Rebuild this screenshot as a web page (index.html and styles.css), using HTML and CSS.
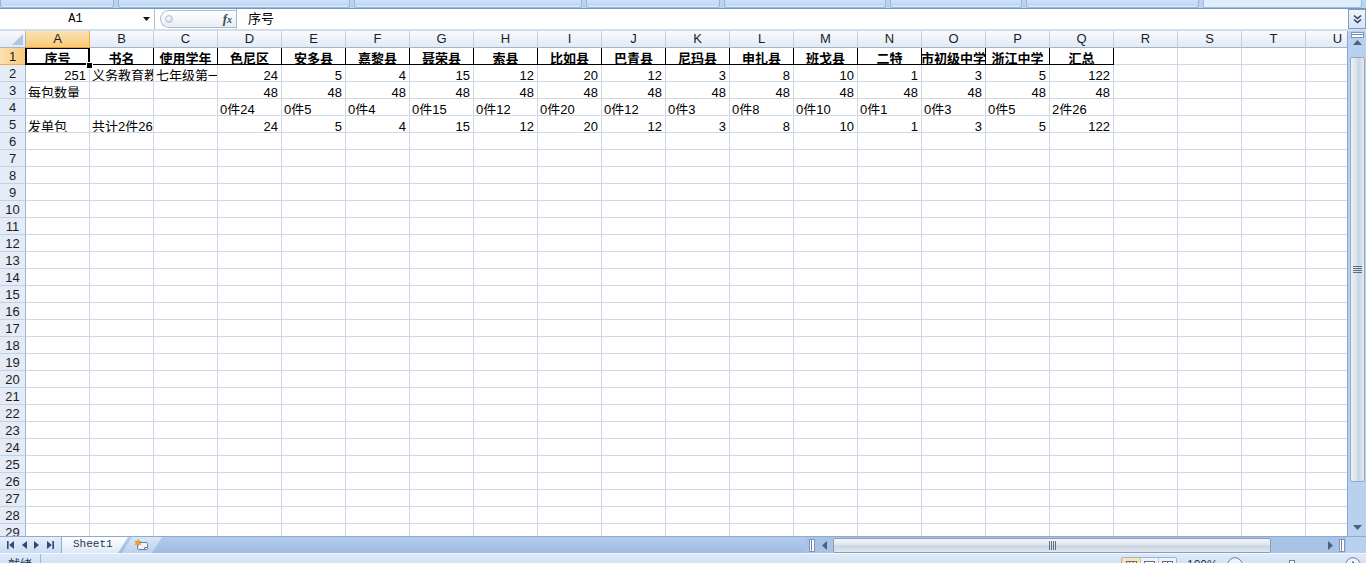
FILE: index.html
```html
<!DOCTYPE html>
<html lang="zh-CN">
<head>
<meta charset="utf-8">
<title>Sheet1</title>
<link rel="stylesheet" href="styles.css">
</head>
<body>
<div class="app">
  <div class="ribbon">
    <div class="grp g1"></div>
    <div class="grp g2"></div>
    <div class="grp g3"></div>
    <div class="grp g4"></div>
    <div class="grp g5"></div>
    <div class="grp g6"></div>
    <div class="grp g7"></div>
    <div class="rtail"></div>
  </div>

  <div class="fbar">
    <div class="namebox">
      <span class="nb-text">A1</span>
      <svg class="nb-arrow" width="7" height="4" viewBox="0 0 7 4"><path d="M0 0H7L3.5 4Z" fill="#111"/></svg>
    </div>
    <div class="fxpill">
      <span class="knob"></span>
      <span class="fx">f<span class="fxx">x</span></span>
    </div>
    <div class="finput">序号</div>
    <div class="fexpand">
      <svg width="9" height="10" viewBox="0 0 9 10"><path d="M1 1.5L4.5 4.5L8 1.5M1 5.5L4.5 8.5L8 5.5" fill="none" stroke="#2b3f5c" stroke-width="1.6"/></svg>
    </div>
  </div>

  <div class="main">
    <div class="sheet">
      <div class="hrow">
        <div class="corner"><svg width="11" height="11" viewBox="0 0 11 11"><path d="M11 0V11H0Z" fill="#b3c6df"/></svg></div>
        <div class="ch on">A</div>
        <div class="ch">B</div>
        <div class="ch">C</div>
        <div class="ch">D</div>
        <div class="ch">E</div>
        <div class="ch">F</div>
        <div class="ch">G</div>
        <div class="ch">H</div>
        <div class="ch">I</div>
        <div class="ch">J</div>
        <div class="ch">K</div>
        <div class="ch">L</div>
        <div class="ch">M</div>
        <div class="ch">N</div>
        <div class="ch">O</div>
        <div class="ch">P</div>
        <div class="ch">Q</div>
        <div class="ch">R</div>
        <div class="ch">S</div>
        <div class="ch">T</div>
        <div class="ch">U</div>
      </div>
      <div class="body">
        <div class="rhs">
          <div class="rh on">1</div>
          <div class="rh">2</div>
          <div class="rh">3</div>
          <div class="rh">4</div>
          <div class="rh">5</div>
          <div class="rh">6</div>
          <div class="rh">7</div>
          <div class="rh">8</div>
          <div class="rh">9</div>
          <div class="rh">10</div>
          <div class="rh">11</div>
          <div class="rh">12</div>
          <div class="rh">13</div>
          <div class="rh">14</div>
          <div class="rh">15</div>
          <div class="rh">16</div>
          <div class="rh">17</div>
          <div class="rh">18</div>
          <div class="rh">19</div>
          <div class="rh">20</div>
          <div class="rh">21</div>
          <div class="rh">22</div>
          <div class="rh">23</div>
          <div class="rh">24</div>
          <div class="rh">25</div>
          <div class="rh">26</div>
          <div class="rh">27</div>
          <div class="rh">28</div>
          <div class="rh">29</div>
        </div>
        <div class="cells">
          <div class="row">
            <div class="c hd a1">序号<span class="sel"></span><span class="fh"></span></div>
            <div class="c hd">书名</div>
            <div class="c hd">使用学年</div>
            <div class="c hd">色尼区</div>
            <div class="c hd">安多县</div>
            <div class="c hd">嘉黎县</div>
            <div class="c hd">聂荣县</div>
            <div class="c hd">索县</div>
            <div class="c hd">比如县</div>
            <div class="c hd">巴青县</div>
            <div class="c hd">尼玛县</div>
            <div class="c hd">申扎县</div>
            <div class="c hd">班戈县</div>
            <div class="c hd">二特</div>
            <div class="c hd">市初级中学</div>
            <div class="c hd">浙江中学</div>
            <div class="c hd">汇总</div>
            <div class="c"></div>
            <div class="c"></div>
            <div class="c"></div>
            <div class="c"></div>
          </div>
          <div class="row">
            <div class="c r">251</div>
            <div class="c">义务教育教</div>
            <div class="c">七年级第一</div>
            <div class="c r">24</div>
            <div class="c r">5</div>
            <div class="c r">4</div>
            <div class="c r">15</div>
            <div class="c r">12</div>
            <div class="c r">20</div>
            <div class="c r">12</div>
            <div class="c r">3</div>
            <div class="c r">8</div>
            <div class="c r">10</div>
            <div class="c r">1</div>
            <div class="c r">3</div>
            <div class="c r">5</div>
            <div class="c r">122</div>
            <div class="c"></div>
            <div class="c"></div>
            <div class="c"></div>
            <div class="c"></div>
          </div>
          <div class="row">
            <div class="c">每包数量</div>
            <div class="c"></div>
            <div class="c"></div>
            <div class="c r">48</div>
            <div class="c r">48</div>
            <div class="c r">48</div>
            <div class="c r">48</div>
            <div class="c r">48</div>
            <div class="c r">48</div>
            <div class="c r">48</div>
            <div class="c r">48</div>
            <div class="c r">48</div>
            <div class="c r">48</div>
            <div class="c r">48</div>
            <div class="c r">48</div>
            <div class="c r">48</div>
            <div class="c r">48</div>
            <div class="c"></div>
            <div class="c"></div>
            <div class="c"></div>
            <div class="c"></div>
          </div>
          <div class="row">
            <div class="c"></div>
            <div class="c"></div>
            <div class="c"></div>
            <div class="c">0件24</div>
            <div class="c">0件5</div>
            <div class="c">0件4</div>
            <div class="c">0件15</div>
            <div class="c">0件12</div>
            <div class="c">0件20</div>
            <div class="c">0件12</div>
            <div class="c">0件3</div>
            <div class="c">0件8</div>
            <div class="c">0件10</div>
            <div class="c">0件1</div>
            <div class="c">0件3</div>
            <div class="c">0件5</div>
            <div class="c">2件26</div>
            <div class="c"></div>
            <div class="c"></div>
            <div class="c"></div>
            <div class="c"></div>
          </div>
          <div class="row">
            <div class="c">发单包</div>
            <div class="c">共计2件26</div>
            <div class="c"></div>
            <div class="c r">24</div>
            <div class="c r">5</div>
            <div class="c r">4</div>
            <div class="c r">15</div>
            <div class="c r">12</div>
            <div class="c r">20</div>
            <div class="c r">12</div>
            <div class="c r">3</div>
            <div class="c r">8</div>
            <div class="c r">10</div>
            <div class="c r">1</div>
            <div class="c r">3</div>
            <div class="c r">5</div>
            <div class="c r">122</div>
            <div class="c"></div>
            <div class="c"></div>
            <div class="c"></div>
            <div class="c"></div>
          </div>
          <div class="empty"></div>
        </div>
      </div>
    </div>

    <div class="vscroll">
      <div class="vsplit"></div>
      <div class="vbtn up"><svg width="9" height="5" viewBox="0 0 9 5"><path d="M0 5L4.5 0L9 5Z" fill="#4a6280"/></svg></div>
      <div class="vthumb"><svg width="9" height="7" viewBox="0 0 9 7"><path d="M0 .5H9M0 2.5H9M0 4.5H9M0 6.5H9" stroke="#5f6f84" stroke-width="1"/></svg></div>
      <div class="vtrack"></div>
      <div class="vbtn down"><svg width="9" height="5" viewBox="0 0 9 5"><path d="M0 0L4.5 5L9 0Z" fill="#4a6280"/></svg></div>
    </div>
  </div>

  <div class="tabbar">
    <div class="nav">
      <svg width="7" height="8" viewBox="0 0 7 8"><path d="M0 0H1.6V8H0Z M7 0V8L2.2 4Z" fill="#2d4a74"/></svg>
      <svg width="5" height="8" viewBox="0 0 5 8"><path d="M5 0V8L0 4Z" fill="#2d4a74"/></svg>
      <svg width="5" height="8" viewBox="0 0 5 8"><path d="M0 0V8L5 4Z" fill="#2d4a74"/></svg>
      <svg width="7" height="8" viewBox="0 0 7 8"><path d="M0 0V8L4.8 4Z M5.4 0H7V8H5.4Z" fill="#2d4a74"/></svg>
    </div>
    <div class="tab">Sheet1</div>
    <div class="instab">
      <svg width="15" height="12" viewBox="0 0 15 12"><rect x="3.5" y="3.5" width="10" height="7" rx="1" fill="#eef3fa" stroke="#6c7f99"/><path d="M10.5 10.5V8.5H13.5" fill="none" stroke="#6c7f99"/><path d="M4 0.5L4.9 2.6L7 2.2L5.6 3.8L7 5.4L4.9 5L4 7.2L3.1 5L1 5.4L2.4 3.8L1 2.2L3.1 2.6Z" fill="#f5a623" stroke="#e07b00" stroke-width=".5"/></svg>
    </div>
    <div class="tabfill"></div>
    <div class="hscroll">
      <div class="hsplit"></div>
      <div class="hbtn"><svg width="5" height="9" viewBox="0 0 5 9"><path d="M5 0V9L0 4.5Z" fill="#4a6280"/></svg></div>
      <div class="hthumb"><svg width="7" height="9" viewBox="0 0 7 9"><path d="M.5 0V9M2.5 0V9M4.5 0V9M6.5 0V9" stroke="#5f6f84" stroke-width="1"/></svg></div>
      <div class="htrack"></div>
      <div class="hbtn"><svg width="5" height="9" viewBox="0 0 5 9"><path d="M0 0V9L5 4.5Z" fill="#4a6280"/></svg></div>
      <div class="hsplit"></div>
    </div>
    <div class="sbcorner"></div>
  </div>

  <div class="status">
    <div class="ready">就绪</div>
    <div class="ssep"></div>
    <div class="sfill"></div>
    <div class="views">
      <div class="vw on"><svg width="11" height="9" viewBox="0 0 11 9"><rect x=".5" y=".5" width="10" height="8" fill="#fff" stroke="#6b6b6b"/><path d="M.5 3.5H10.5M3.8 .5V8.5M7.2 .5V8.5" stroke="#6b6b6b"/></svg></div>
      <div class="vw"><svg width="11" height="9" viewBox="0 0 11 9"><rect x=".5" y=".5" width="10" height="8" fill="#fff" stroke="#6b6b6b"/><rect x="3" y="2.5" width="5" height="6" fill="#d7d7d7" stroke="#6b6b6b"/></svg></div>
      <div class="vw"><svg width="11" height="9" viewBox="0 0 11 9"><rect x=".5" y=".5" width="10" height="8" fill="#fff" stroke="#6b6b6b"/><path d="M5.5 .5V8.5" stroke="#6b6b6b"/></svg></div>
    </div>
    <div class="zoomtxt">100%</div>
    <div class="zbtn"><svg width="16" height="16" viewBox="0 0 16 16"><circle cx="8" cy="8" r="7.3" fill="#eef3fa" stroke="#6c7f99"/><path d="M4.5 8H11.5" stroke="#2d3f58" stroke-width="1.4"/></svg></div>
    <div class="zslider"><div class="zline"></div><div class="zknob"></div></div>
    <div class="zbtn"><svg width="16" height="16" viewBox="0 0 16 16"><circle cx="8" cy="8" r="7.3" fill="#eef3fa" stroke="#6c7f99"/><path d="M4.5 8H11.5M8 4.5V11.5" stroke="#2d3f58" stroke-width="1.4"/></svg></div>
  </div>
</div>
</body>
</html>
```

FILE: styles.css
```css
* {
  box-sizing: border-box;
  margin: 0;
  padding: 0;
}

html, body {
  width: 1366px;
  height: 563px;
  overflow: hidden;
}

body {
  font-family: "Liberation Sans", "Noto Sans CJK SC", sans-serif;
  font-size: 13px;
  color: #000;
  background: #fff;
}

.app {
  width: 1366px;
  height: 563px;
  display: flex;
  flex-direction: column;
  overflow: hidden;
}

/* ---------- ribbon remnant ---------- */
.ribbon {
  flex-shrink: 0;
  height: 9px;
  display: flex;
  gap: 4px;
  padding-right: 4px;
  background: #bcd3ef;
  border-bottom: 1px solid #7395c2;
}

.grp {
  height: 8px;
  background: linear-gradient(#cfe1f7, #bdd5f2);
  border: 1px solid #94b5df;
  border-top: none;
  border-radius: 0 0 3px 3px;
  box-shadow: inset 0 -1px 0 #e4effc;
}

.g1 { width: 114px; }
.g2 { width: 232px; }
.g3 { width: 228px; }
.g4 { width: 134px; }
.g5 { width: 162px; }
.g6 { width: 132px; }
.g7 { width: 173px; }

.rtail {
  flex: 1;
  height: 8px;
  background: #e1eefc;
  border: 1px solid #9dbde4;
  border-top: none;
  border-radius: 0 0 4px 0;
}

/* ---------- formula bar ---------- */
.fbar {
  flex-shrink: 0;
  height: 22px;
  display: flex;
  background: #fff;
  border-bottom: 2px solid #d3deec;
}

.namebox {
  width: 155px;
  height: 20px;
  display: flex;
  align-items: center;
  border-right: 1px solid #a9bdd6;
}

.nb-text {
  flex: 1;
  text-align: center;
  font-family: "Liberation Mono", monospace;
  font-size: 12px;
  padding-left: 8px;
}

.nb-arrow {
  margin-right: 4px;
}

.fxpill {
  width: 76px;
  height: 18px;
  margin: 1px 0 0 5px;
  display: flex;
  align-items: center;
  justify-content: space-between;
  border: 1px solid #a9bbd3;
  border-right: none;
  border-radius: 9px 0 0 9px;
  background: linear-gradient(#fdfeff, #e9eef5);
  padding: 0 4px;
}

.knob {
  width: 8px;
  height: 8px;
  border-radius: 50%;
  background: radial-gradient(circle at 40% 35%, #ffffff, #c3cbd6);
  border: 1px solid #b8c2cf;
}

.fx {
  font-family: "Liberation Serif", serif;
  font-style: italic;
  font-weight: bold;
  font-size: 13px;
  color: #404a57;
  line-height: 16px;
}

.fxx {
  font-size: 10px;
}

.finput {
  flex: 1;
  height: 20px;
  border-left: 1px solid #a9bbd3;
  padding-left: 11px;
  font-size: 13px;
  line-height: 19px;
}

.fexpand {
  width: 18px;
  height: 20px;
  display: flex;
  align-items: center;
  justify-content: center;
  background: linear-gradient(#eef4fb, #d6e3f3);
  border: 1px solid #7f9bc3;
}

/* ---------- main grid ---------- */
.main {
  flex-shrink: 0;
  height: 505px;
  display: flex;
}

.sheet {
  width: 1347px;
  overflow: hidden;
  display: flex;
  flex-direction: column;
}

.hrow {
  display: flex;
  height: 17px;
  flex-shrink: 0;
}

.corner {
  width: 26px;
  flex-shrink: 0;
  display: flex;
  align-items: flex-end;
  justify-content: flex-end;
  padding: 0 2px 2px 0;
  background: linear-gradient(#f6f9fc, #e1e9f4);
  border-right: 1px solid #9eb6ce;
  border-bottom: 1px solid #9eb6ce;
}

.ch {
  width: 64px;
  flex-shrink: 0;
  text-align: center;
  line-height: 16px;
  color: #1d1d1d;
  background: linear-gradient(#f8fafd, #e3eaf4);
  border-right: 1px solid #c2d0e2;
  border-bottom: 1px solid #9eb6ce;
}

.ch.on {
  background: linear-gradient(#fbe2b2, #f7cb7a);
  border-right-color: #f0a94a;
  border-bottom-color: #f29536;
}

.body {
  display: flex;
  flex: 1;
  overflow: hidden;
}

.rhs {
  width: 26px;
  flex-shrink: 0;
  display: flex;
  flex-direction: column;
}

.rh {
  height: 17px;
  flex-shrink: 0;
  text-align: center;
  line-height: 16px;
  padding-top: 1px;
  color: #1d1d1d;
  background: #e4ecf7;
  border-right: 1px solid #9eb6ce;
  border-bottom: 1px solid #c3d1e3;
}

.rh.on {
  background: linear-gradient(90deg, #fbe2b2, #f7cb7a);
  border-right-color: #f29536;
  border-bottom-color: #f0a94a;
}

.cells {
  flex: 1;
  display: flex;
  flex-direction: column;
}

.row {
  display: flex;
  height: 17px;
  flex-shrink: 0;
}

.c {
  width: 64px;
  height: 17px;
  flex-shrink: 0;
  overflow: hidden;
  white-space: nowrap;
  padding: 3px 3px 0 2px;
  line-height: 15px;
  border-right: 1px solid #d0d7e5;
  border-bottom: 1px solid #d0d7e5;
}

.c.r {
  text-align: right;
}

.c.hd {
  font-weight: bold;
  display: flex;
  justify-content: center;
  padding: 3px 0 0;
  border-right-color: #000;
  border-bottom-color: #000;
}

.c.a1 {
  overflow: visible;
  position: relative;
}

.sel {
  position: absolute;
  left: -1px;
  top: -1px;
  width: 65px;
  height: 18px;
  border: 2px solid #000;
}

.fh {
  position: absolute;
  left: 60px;
  top: 14px;
  width: 7px;
  height: 7px;
  background: #000;
  border: 1px solid #fff;
  z-index: 2;
}

.empty {
  height: 408px;
  flex-shrink: 0;
  background-image:
    repeating-linear-gradient(90deg, transparent 0 63px, #d0d7e5 63px 64px),
    repeating-linear-gradient(180deg, transparent 0 16px, #d0d7e5 16px 17px);
}

/* ---------- vertical scrollbar ---------- */
.vscroll {
  width: 19px;
  display: flex;
  flex-direction: column;
  align-items: center;
  background: #b9d0ef;
  border-left: 1px solid #86a6d3;
}

.vsplit {
  width: 13px;
  height: 6px;
  margin-top: 1px;
  background: #fff;
  border: 1px solid #7c96bc;
  box-shadow: inset 0 1px 0 #fff, inset 0 2px 0 #6f86a8;
}

.vbtn {
  width: 100%;
  height: 18px;
  display: flex;
  justify-content: center;
}

.vbtn.up {
  align-items: flex-start;
  padding-top: 2px;
}

.vbtn.down {
  height: 17px;
  align-items: center;
}

.vthumb {
  width: 15px;
  height: 425px;
  margin-top: 1px;
  flex-shrink: 0;
  display: flex;
  align-items: center;
  justify-content: center;
  border: 1px solid #95a8c4;
  border-radius: 2px;
  background: linear-gradient(90deg, #eef2f7, #d9e1ec 45%, #c8d3e2 55%, #e3e9f1);
}

.vtrack {
  flex: 1;
}

/* ---------- sheet tab bar ---------- */
.tabbar {
  flex-shrink: 0;
  height: 17px;
  display: flex;
  background: linear-gradient(#b3cbec, #9fbbe2);
  border-top: 1px solid #8eaad3;
}

.nav {
  width: 62px;
  flex-shrink: 0;
  display: flex;
  align-items: center;
  justify-content: space-around;
  padding: 0 3px;
  background: linear-gradient(#e6eefa, #cddcf1);
  border-right: 1px solid #8eaad3;
}

.tab {
  width: 66px;
  flex-shrink: 0;
  padding-left: 11px;
  font-family: "Liberation Mono", monospace;
  font-size: 11px;
  line-height: 15px;
  color: #1c3557;
  background: linear-gradient(#ffffff, #dde8f6);
  clip-path: polygon(0 0, 100% 0, calc(100% - 10px) 100%, 0 100%);
}

.instab {
  width: 40px;
  flex-shrink: 0;
  margin-left: -6px;
  display: flex;
  align-items: center;
  justify-content: center;
  padding-right: 2px;
  background: linear-gradient(#d9e6f7, #bcd1ee);
  clip-path: polygon(10px 0, 100% 0, calc(100% - 10px) 100%, 0 100%);
}

.tabfill {
  flex: 1;
}

.hscroll {
  width: 541px;
  flex-shrink: 0;
  display: flex;
  align-items: center;
  padding-left: 4px;
  padding-right: 1px;
  background: #a9c3e7;
}

.hsplit {
  width: 6px;
  height: 13px;
  background: #fff;
  border: 1px solid #7c96bc;
  box-shadow: inset 1px 0 0 #fff, inset 2px 0 0 #6f86a8;
}

.hbtn {
  width: 18px;
  height: 15px;
  display: flex;
  align-items: center;
  justify-content: center;
}

.hbtn:last-of-type {
  width: 17px;
}

.hthumb {
  width: 438px;
  height: 15px;
  display: flex;
  align-items: center;
  justify-content: center;
  border: 1px solid #8b9eb9;
  border-radius: 2px;
  background: linear-gradient(#f4f7fb, #dde5ef 45%, #c9d4e2 55%, #e1e8f1);
}

.htrack {
  flex: 1;
}

.sbcorner {
  width: 20px;
  flex-shrink: 0;
  background: #b9d0ef;
}

/* ---------- status bar ---------- */
.status {
  flex-shrink: 0;
  height: 22px;
  display: flex;
  align-items: flex-start;
  padding-top: 3px;
  padding-right: 5px;
  background: linear-gradient(#dde9f8, #c9dbf2);
  border-top: 1px solid #f3f8fe;
}

.ready {
  width: 40px;
  padding-left: 8px;
  font-size: 12px;
  line-height: 16px;
  color: #1c3557;
}

.ssep {
  width: 1px;
  height: 20px;
  margin-top: -3px;
  background: #9fb7d8;
}

.sfill {
  flex: 1;
}

.views {
  display: flex;
  border: 1px solid #9ab2d4;
  border-radius: 2px;
}

.vw {
  width: 18px;
  height: 17px;
  display: flex;
  justify-content: center;
  padding-top: 3px;
  border-left: 1px solid #b4c7e1;
  background: linear-gradient(#eef4fb, #d6e3f3);
}

.vw:first-child {
  border-left: none;
}

.vw.on {
  background: linear-gradient(#fde6b5, #f8c86c);
}

.zoomtxt {
  margin-left: 10px;
  width: 30px;
  font-size: 12px;
  line-height: 16px;
  color: #1c3557;
}

.zbtn {
  margin-left: 10px;
  width: 16px;
  height: 16px;
}

.zbtn:last-child {
  margin-left: 0;
}

.zslider {
  width: 102px;
  height: 16px;
  display: flex;
  align-items: center;
  justify-content: center;
  position: relative;
}

.zline {
  position: absolute;
  left: 4px;
  right: 4px;
  top: 8px;
  height: 1px;
  background: #7c92b2;
}

.zknob {
  width: 6px;
  height: 11px;
  margin-left: -4px;
  background: #f4f7fb;
  border: 1px solid #6c7f99;
  z-index: 1;
}
```
